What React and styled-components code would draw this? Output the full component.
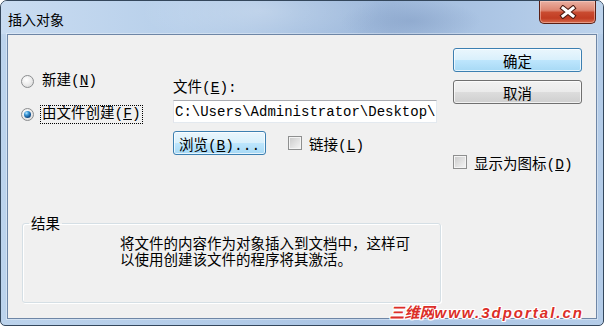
import React from 'react';
import styled, { createGlobalStyle } from 'styled-components';

const UI_FONT = '"Liberation Mono", "Noto Sans CJK SC", monospace';
const CJK_FONT = '"Noto Sans CJK SC", "Liberation Sans", sans-serif';

const GlobalStyle = createGlobalStyle`
  html, body {
    margin: 0;
    padding: 0;
    background: #ffffff;
  }
  body {
    font-family: ${UI_FONT};
  }
`;

const Window = styled.div`
  position: relative;
  box-sizing: border-box;
  width: 604px;
  height: 326px;
  display: flex;
  flex-direction: column;
  border: 1px solid #34475c;
  border-radius: 7px 7px 5px 5px;
  overflow: hidden;
  background:
    linear-gradient(180deg, rgba(255, 255, 255, 0.28) 0%, rgba(255, 255, 255, 0) 12%),
    linear-gradient(90deg, #bcd3ec 0%, #b2cbe8 40%, #a9c3e3 60%, #b4cce8 100%);
`;

const TitleBar = styled.div`
  height: 33px;
  display: flex;
  align-items: flex-start;
  justify-content: space-between;
  padding-left: 7px;
  background:
    radial-gradient(ellipse 70px 22px at 410px 20px, rgba(125, 152, 192, 0.45), rgba(125, 152, 192, 0) 100%),
    radial-gradient(ellipse 120px 40px at 260px 10px, rgba(255, 255, 255, 0.25), rgba(255, 255, 255, 0) 100%),
    linear-gradient(90deg, #c9dcf1 0%, #b7cfea 30%, #a4bfe0 50%, #9fb9db 65%, #afc8e6 85%, #bdd3ec 100%);
`;

const Title = styled.span`
  margin-top: 9px;
  font-family: ${CJK_FONT};
  font-size: 14px;
  line-height: 18px;
  color: #000;
`;

const CloseButton = styled.button`
  width: 57px;
  height: 23px;
  margin-right: 7px;
  padding: 0;
  display: flex;
  align-items: center;
  justify-content: center;
  border: 1px solid #5a1f14;
  border-top: none;
  border-radius: 0 0 5px 5px;
  box-shadow: inset 0 0 0 1px rgba(255, 220, 210, 0.45);
  background: linear-gradient(180deg, #eab0a2 0%, #dd8571 42%, #c94b30 52%, #c13c23 78%, #d76a4c 100%);
`;

const ClientFrame = styled.div`
  flex: 1;
  display: flex;
  padding: 0 6px 6px;
`;

const Client = styled.div`
  flex: 1;
  box-sizing: border-box;
  border: 1px solid #6e86a6;
  box-shadow: 0 0 0 1px rgba(255, 255, 255, 0.35);
  background: #f0f0f0;
  display: grid;
  grid-template-columns: 152px 280px 129px;
  grid-template-rows: 167px auto;
  align-items: start;
  padding: 13px 0 0 13px;
  font-family: ${UI_FONT};
  font-size: 14.5px;
  color: #000;
`;

const RadioGroup = styled.div`
  margin-top: 23px;
  display: flex;
  flex-direction: column;
  gap: 13px;
`;

const RadioRow = styled.div`
  height: 20px;
  display: flex;
  align-items: center;
  gap: 6px;
`;

const RadioCircle = styled.span`
  position: relative;
  box-sizing: border-box;
  width: 13px;
  height: 13px;
  flex: none;
  border-radius: 50%;
  border: 1px solid #8b8d8f;
  background: radial-gradient(circle at 40% 35%, #ffffff 0%, #eeeeee 45%, #d2d2d2 100%);

  &::after {
    content: '';
    display: ${p => (p.$checked ? 'block' : 'none')};
    position: absolute;
    left: 2px;
    top: 2px;
    width: 7px;
    height: 7px;
    border-radius: 50%;
    background: radial-gradient(circle at 35% 30%, #b9e6ff 0%, #3d9ad8 30%, #14528e 65%, #0b2f5c 100%);
  }
`;

const ItemText = styled.span`
  display: inline-block;
  line-height: 17px;
  padding: 0 1px;
  border: 1px ${p => (p.$focused ? 'dotted #000' : 'solid transparent')};
  white-space: nowrap;
`;

const FileSection = styled.div`
  margin-top: 30px;
  display: flex;
  flex-direction: column;
`;

const FieldLabel = styled.div`
  height: 20px;
  line-height: 20px;
`;

const PathInput = styled.input`
  box-sizing: border-box;
  width: 264px;
  height: 23px;
  margin: 2px 0 0;
  padding: 0 0 0 1px;
  border: 1px solid;
  border-color: #abadb3 #e3e9ef #e3e9ef #e2e3ea;
  background: #fff;
  font-family: "Liberation Mono", monospace;
  font-size: 14px;
  color: #000;
  outline: none;
`;

const BrowseRow = styled.div`
  margin-top: 8px;
  display: flex;
  align-items: center;
  gap: 22px;
`;

const Button = styled.button`
  box-sizing: border-box;
  width: ${p => p.$width || 129}px;
  height: 24px;
  padding: 0;
  border-radius: 3px;
  font-family: ${UI_FONT};
  font-size: 14.5px;
  color: #000;
  border: 1px solid ${p => (p.$active ? '#3c7fb1' : '#707070')};
  box-shadow: inset 0 0 0 1px rgba(255, 255, 255, 0.7);
  background: ${p =>
    p.$active
      ? 'linear-gradient(180deg, #eaf6fd 0%, #d9f0fc 49%, #bee6fd 50%, #a7d9f5 100%)'
      : 'linear-gradient(180deg, #f2f2f2 0%, #ebebeb 49%, #dddddd 50%, #cfcfcf 100%)'};
`;

const CheckRow = styled.div`
  display: flex;
  align-items: center;
  gap: 7px;
  height: 16px;
  margin-top: ${p => p.$top || 0}px;
  white-space: nowrap;
`;

const CheckBox = styled.span`
  box-sizing: border-box;
  width: 14px;
  height: 14px;
  flex: none;
  border: 1px solid #8e8f8f;
  box-shadow: inset 0 0 0 1px #f4f4f4;
  background: linear-gradient(135deg, #c8c8c8 0%, #e0e0e0 50%, #f6f6f6 100%);
`;

const RightColumn = styled.div`
  display: flex;
  flex-direction: column;
  gap: 8px;
`;

const GroupBox = styled.fieldset`
  grid-column: 1 / 3;
  box-sizing: border-box;
  width: 419px;
  height: 88px;
  margin: 0 0 0 1px;
  padding: 0;
  border: 1px solid #d5dfe5;
  border-radius: 3px;
  box-shadow: inset 1px 1px 0 #ffffff, 1px 1px 0 #ffffff;
`;

const GroupLegend = styled.legend`
  margin-left: 6px;
  padding: 0 2px;
  font-family: ${CJK_FONT};
  font-size: 14.5px;
  line-height: 16px;
`;

const Description = styled.p`
  margin: 4px 0 0;
  padding-left: 97px;
  font-family: ${CJK_FONT};
  font-size: 14.5px;
  line-height: 16px;
  white-space: nowrap;
`;

const Watermark = styled.div`
  position: absolute;
  right: 19px;
  bottom: 4px;
  display: flex;
  align-items: baseline;
  color: #dc2e28;
  font-weight: bold;
  font-style: italic;
  text-shadow:
    1px 0 0 #fff, -1px 0 0 #fff, 0 1px 0 #fff, 0 -1px 0 #fff,
    1px 1px 0 #fff, -1px -1px 0 #fff, 1px -1px 0 #fff, -1px 1px 0 #fff;
`;

const WatermarkCjk = styled.span`
  font-family: ${CJK_FONT};
  font-size: 15px;
  line-height: 16px;
`;

const WatermarkUrl = styled.span`
  font-family: "Liberation Sans", sans-serif;
  font-size: 15px;
  line-height: 16px;
  letter-spacing: 2px;
`;

const CloseIcon = () => (
  <svg width="18" height="14" viewBox="0 0 18 14">
    <path d="M4 3 L14 11 M14 3 L4 11" stroke="#4b1a10" strokeWidth="5" strokeLinecap="square" />
    <path d="M4 3 L14 11 M14 3 L4 11" stroke="#ffffff" strokeWidth="3" strokeLinecap="square" />
  </svg>
);

const Key = ({ children }) => <u>{children}</u>;

export default function App() {
  return (
    <>
      <GlobalStyle />
      <Window>
        <TitleBar>
          <Title>插入对象</Title>
          <CloseButton aria-label="关闭">
            <CloseIcon />
          </CloseButton>
        </TitleBar>
        <ClientFrame>
          <Client>
            <RadioGroup>
              <RadioRow>
                <RadioCircle />
                <ItemText>新建(<Key>N</Key>)</ItemText>
              </RadioRow>
              <RadioRow>
                <RadioCircle $checked />
                <ItemText $focused>由文件创建(<Key>F</Key>)</ItemText>
              </RadioRow>
            </RadioGroup>

            <FileSection>
              <FieldLabel>文件(<Key>E</Key>):</FieldLabel>
              <PathInput readOnly value="C:\Users\Administrator\Desktop\" />
              <BrowseRow>
                <Button $active $width={93}>浏览(<Key>B</Key>)...</Button>
                <CheckRow>
                  <CheckBox />
                  <span>链接(<Key>L</Key>)</span>
                </CheckRow>
              </BrowseRow>
            </FileSection>

            <RightColumn>
              <Button $active>确定</Button>
              <Button>取消</Button>
              <CheckRow $top={42}>
                <CheckBox />
                <span>显示为图标(<Key>D</Key>)</span>
              </CheckRow>
            </RightColumn>

            <GroupBox>
              <GroupLegend>结果</GroupLegend>
              <Description>
                将文件的内容作为对象插入到文档中，这样可
                <br />
                以使用创建该文件的程序将其激活。
              </Description>
            </GroupBox>
          </Client>
        </ClientFrame>
        <Watermark>
          <WatermarkCjk>三维网</WatermarkCjk>
          <WatermarkUrl>www.3dportal.cn</WatermarkUrl>
        </Watermark>
      </Window>
    </>
  );
}
